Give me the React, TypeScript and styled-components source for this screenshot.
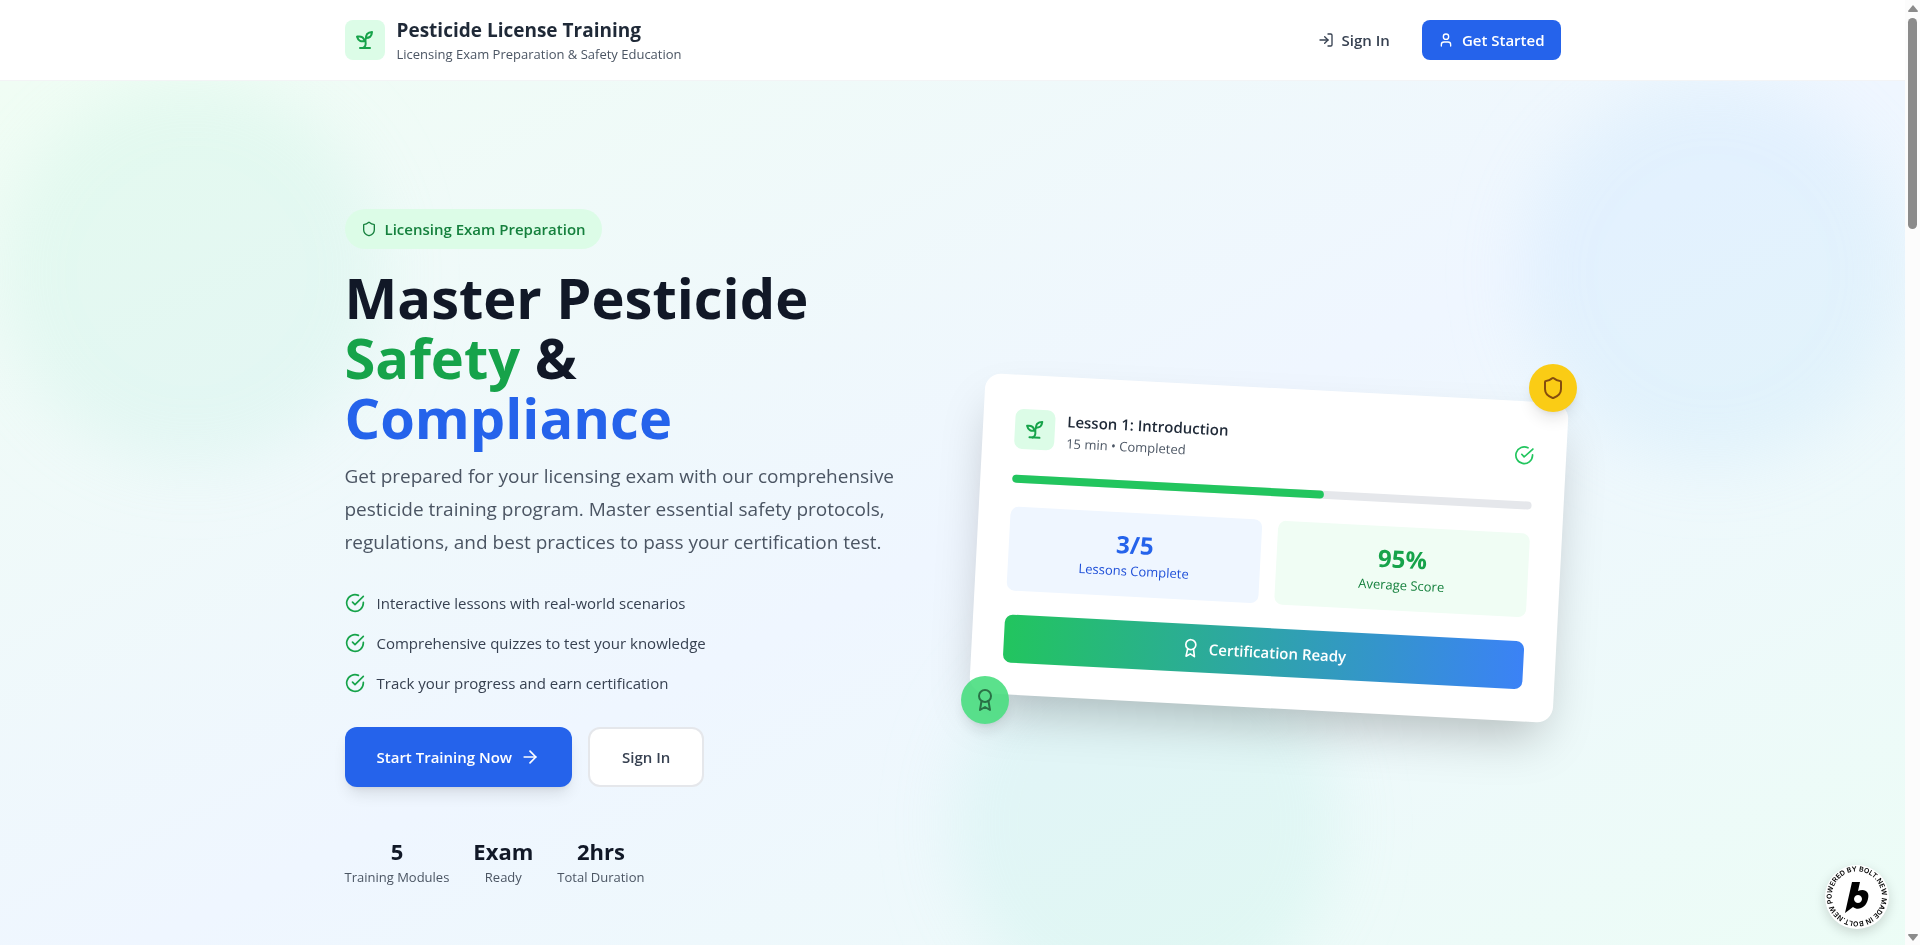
import React from 'react';
import styled, { createGlobalStyle } from 'styled-components';
import { Shield, LogIn, User, ArrowRight } from 'lucide-react';

const Global = createGlobalStyle`
  *, *::before, *::after { box-sizing: border-box; }
  html, body { margin: 0; }
  body { font-family: "Open Sans", "Noto Sans", sans-serif; font-size: 15px; line-height: 24px; color: #111827; overflow: hidden; }
  h1, h2, h3, p, ul, dl, dd, dt { margin: 0; padding: 0; }
  button { font: inherit; cursor: pointer; border: 0; }
`;

const Frame = styled.div`display: flex; height: 100vh; overflow: hidden;`;
const Page = styled.div`flex: 1; min-width: 0; position: relative;`;
const Container = styled.div`max-width: 1280px; margin: 0 auto; padding: 0 32px;`;
const Header = styled.header`background: #fff; border-bottom: 1px solid #f3f4f6; position: relative; z-index: 2;`;
const HeaderRow = styled(Container)`display: flex; align-items: center; justify-content: space-between; height: 80px;`;
const Brand = styled.div`display: flex; align-items: center; gap: 12px;`;
const SproutTile = styled.div`
  display: flex; align-items: center; justify-content: center; width: 40px; height: 40px;
  border-radius: 8px; background: #dcfce7; color: #16a34a;
`;
const BrandName = styled.div`font-size: 19px; line-height: 28px; font-weight: 700; color: #1f2937;`;
const Small = styled.p`font-size: 13px; line-height: 20px; color: #4b5563;`;
const Nav = styled.nav`display: flex; align-items: center; gap: 16px;`;
const NavButton = styled.button<{ $primary?: boolean }>`
  display: flex; align-items: center; gap: 8px; padding: 8px 16px; border-radius: 8px; font-weight: 600;
  background: ${p => (p.$primary ? '#2563eb' : 'transparent')};
  color: ${p => (p.$primary ? '#fff' : '#374151')};
`;

const Hero = styled.section`
  position: relative; overflow: hidden; padding: 128px 0;
  background: linear-gradient(to bottom right, #f0fdf4, #eff6ff, #ecfdf5);
`;
const Blob = styled.div<{ $color: string; $place: 'left' | 'right' | 'bottom' }>`
  position: absolute; width: 384px; height: 384px; border-radius: 50%;
  filter: blur(32px); opacity: 0.2; mix-blend-mode: multiply;
  background: ${p => p.$color};
  ${p => ({
    left: 'top: 0; left: 0;',
    right: 'top: 0; right: 0;',
    bottom: 'bottom: 0; left: 50%;',
  })[p.$place]}
`;
const HeroGrid = styled(Container)`
  position: relative; display: grid; grid-template-columns: 1fr 1fr; gap: 48px; align-items: center;
`;
const Copy = styled.div`display: flex; flex-direction: column; align-items: flex-start; gap: 32px;`;
const Intro = styled.div``;
const Pill = styled.div`
  display: flex; width: fit-content; align-items: center; gap: 8px; padding: 8px 16px; border-radius: 20px;
  background: #dcfce7; color: #15803d; font-weight: 600;
`;
const Title = styled.h1`margin-top: 18px; font-size: 56px; line-height: 60px; font-weight: 700;`;
const Tint = styled.span<{ $color: string; $block?: boolean }>`
  color: ${p => p.$color}; display: ${p => (p.$block ? 'block' : 'inline')};
`;
const Lead = styled.p`margin-top: 13px; font-size: 19px; line-height: 33px; color: #4b5563;`;
const Features = styled.ul`list-style: none; display: flex; flex-direction: column; gap: 16px; color: #374151;`;
const Feature = styled.li`display: flex; align-items: center; gap: 12px; svg { color: #16a34a; }`;
const Actions = styled.div`display: flex; gap: 16px;`;
const Cta = styled.button<{ $primary?: boolean }>`
  display: flex; align-items: center; gap: 8px; height: 60px; padding: 0 32px; border-radius: 12px; font-weight: 600;
  ${p => p.$primary
    ? 'background: #2563eb; color: #fff; box-shadow: 0 10px 15px -3px rgba(0,0,0,.1), 0 4px 6px -4px rgba(0,0,0,.1);'
    : 'background: #fff; color: #374151; border: 2px solid #e5e7eb;'}
`;
const Stats = styled.dl`display: flex; gap: 24px; padding-top: 16px; text-align: center;`;
const Stat = styled.div`display: flex; flex-direction: column-reverse;`;
const StatValue = styled.dd`font-size: 22px; line-height: 32px; font-weight: 700;`;
const StatLabel = styled.dt`font-size: 13px; line-height: 20px; color: #4b5563;`;

const Preview = styled.div`position: relative;`;
const Card = styled.div`
  transform: rotate(3deg); background: #fff; border-radius: 16px; padding: 32px;
  display: flex; flex-direction: column; gap: 24px; box-shadow: 0 25px 50px -12px rgba(0,0,0,.25);
`;
const CardHead = styled.div`display: flex; align-items: center; justify-content: space-between; color: #22c55e;`;
const LessonTitle = styled.h2`font-size: 15px; line-height: 24px; font-weight: 600; color: #1f2937;`;
const Track = styled.div`height: 8px; border-radius: 4px; background: #e5e7eb;`;
const Fill = styled.div`height: 8px; border-radius: 4px; background: #22c55e;`;
const Tiles = styled.dl`display: grid; grid-template-columns: 1fr 1fr; gap: 16px; text-align: center;`;
const Tile = styled.div<{ $bg: string; $value: string; $label: string }>`
  display: flex; flex-direction: column-reverse; padding: 16px; border-radius: 8px; background: ${p => p.$bg};
  dd { color: ${p => p.$value}; font-size: 24px; }
  dt { color: ${p => p.$label}; }
`;
const Ready = styled.button`
  display: flex; align-items: center; justify-content: center; gap: 8px; height: 48px; border-radius: 8px;
  background: linear-gradient(to right, #22c55e, #3b82f6); color: #fff; font-weight: 600;
`;
const Floater = styled.div<{ $corner: 'top' | 'bottom' }>`
  position: absolute; display: flex; align-items: center; justify-content: center; width: 48px; height: 48px;
  border-radius: 50%; box-shadow: 0 10px 15px -3px rgba(0,0,0,.1), 0 4px 6px -4px rgba(0,0,0,.1);
  ${p => p.$corner === 'top'
    ? 'top: -24px; right: -16px; background: #facc15; color: #854d0e;'
    : 'bottom: -16px; left: -16px; background: #4ade80; color: #166534; opacity: .9;'}
`;

const BoltBadge = styled.a`
  position: absolute; right: 16px; bottom: 16px; z-index: 3; width: 64px; height: 64px; border-radius: 50%;
  background: #fff; box-shadow: 0 4px 12px rgba(0,0,0,.15);
  text { font: 600 7px "Inter", sans-serif; fill: #000; }
  svg { display: block; }
`;
const ScrollRail = styled.div`
  width: 15px; background: #fcfcfc; display: flex; flex-direction: column; align-items: center;
  justify-content: space-between; padding: 5px 0 4px; flex: none;
`;
const ScrollThumb = styled.div`width: 9px; height: 211px; border-radius: 5px; background: #8b8b8b; margin: 6px 0 auto;`;

const Glyph = ({ size, children }: { size: number; children: React.ReactNode }) => (
  <svg
    width={size} height={size} viewBox="0 0 24 24" fill="none" stroke="currentColor"
    strokeWidth="2" strokeLinecap="round" strokeLinejoin="round" aria-hidden="true"
  >
    {children}
  </svg>
);
const Sprout = () => (
  <Glyph size={24}>
    <path d="M7 20h10" />
    <path d="M10 20c5.5-2.5.8-6.4 3-10" />
    <path d="M9.5 9.4c1.1.8 1.8 2.2 2.3 3.7-2 .4-3.5.4-4.8-.3-1.2-.6-2.3-1.9-3-4.2 2.8-.5 4.4 0 5.5.8z" />
    <path d="M14.1 6a7 7 0 0 0-1.1 4c1.9-.1 3.3-.6 4.3-1.4 1-1 1.6-2.3 1.7-4.6-2.7.1-4 1-4.9 2z" />
  </Glyph>
);
const Check = () => (
  <Glyph size={20}>
    <path d="M22 11.08V12a10 10 0 1 1-5.93-9.14" />
    <path d="m9 11 3 3L22 4" />
  </Glyph>
);
const Award = ({ size }: { size: number }) => (
  <Glyph size={size}>
    <circle cx="12" cy="8" r="6" />
    <path d="M15.477 12.89 17 22l-5-3-5 3 1.523-9.11" />
  </Glyph>
);

const features = [
  'Interactive lessons with real-world scenarios',
  'Comprehensive quizzes to test your knowledge',
  'Track your progress and earn certification',
];
const stats = [['5', 'Training Modules'], ['Exam', 'Ready'], ['2hrs', 'Total Duration']];

export default function App() {
  return (
    <Frame>
      <Global />
      <Page>
        <Header>
          <HeaderRow>
            <Brand>
              <SproutTile><Sprout /></SproutTile>
              <div>
                <BrandName>Pesticide License Training</BrandName>
                <Small>Licensing Exam Preparation &amp; Safety Education</Small>
              </div>
            </Brand>
            <Nav>
              <NavButton><LogIn size={16} />Sign In</NavButton>
              <NavButton $primary><User size={16} />Get Started</NavButton>
            </Nav>
          </HeaderRow>
        </Header>
        <Hero>
          <Blob $color="#bff0e0" $place="left" />
          <Blob $color="#bfe3fa" $place="right" />
          <Blob $color="#b8f0e0" $place="bottom" />
          <HeroGrid>
            <Copy>
              <Intro>
                <Pill><Shield size={16} />Licensing Exam Preparation</Pill>
                <Title>
                  Master Pesticide <Tint $color="#16a34a">Safety</Tint> &amp;{' '}
                  <Tint $color="#2563eb" $block>Compliance</Tint>
                </Title>
                <Lead>
                  Get prepared for your licensing exam with our comprehensive pesticide training program. Master
                  essential safety protocols, regulations, and best practices to pass your certification test.
                </Lead>
              </Intro>
              <Features>
                {features.map(f => <Feature key={f}><Check />{f}</Feature>)}
              </Features>
              <Actions>
                <Cta $primary>Start Training Now<ArrowRight size={20} /></Cta>
                <Cta>Sign In</Cta>
              </Actions>
              <Stats>
                {stats.map(([v, l]) => (
                  <Stat key={l}><StatLabel>{l}</StatLabel><StatValue>{v}</StatValue></Stat>
                ))}
              </Stats>
            </Copy>
            <Preview>
              <Card>
                <CardHead>
                  <Brand>
                    <SproutTile><Sprout /></SproutTile>
                    <div>
                      <LessonTitle>Lesson 1: Introduction</LessonTitle>
                      <Small>15 min • Completed</Small>
                    </div>
                  </Brand>
                  <Check />
                </CardHead>
                <Track><Fill style={{ width: '60%' }} /></Track>
                <Tiles>
                  <Tile $bg="#eff6ff" $value="#2563eb" $label="#1d4ed8">
                    <StatLabel>Lessons Complete</StatLabel><StatValue>3/5</StatValue>
                  </Tile>
                  <Tile $bg="#f0fdf4" $value="#16a34a" $label="#15803d">
                    <StatLabel>Average Score</StatLabel><StatValue>95%</StatValue>
                  </Tile>
                </Tiles>
                <Ready><Award size={20} />Certification Ready</Ready>
              </Card>
              <Floater $corner="top"><Shield size={24} /></Floater>
              <Floater $corner="bottom"><Award size={24} /></Floater>
            </Preview>
          </HeroGrid>
        </Hero>
        <BoltBadge href="#bolt" aria-label="Powered by Bolt.new">
          <svg width="64" height="64" viewBox="0 0 64 64">
            <path id="ring" d="M7.9 38.5A25 25 0 1 1 7.93 38.6" fill="none" />
            <text><textPath href="#ring">POWERED BY BOLT.NEW MADE IN BOLT.NEW</textPath></text>
            <path fillRule="evenodd" d="M27 17h8l-2 9c7-3 12 1 10 8-2 9-10 12-15 8l-8 6zM33 30a4 4 0 1 0 .01 0z" />
          </svg>
        </BoltBadge>
      </Page>
      <ScrollRail aria-hidden="true">
        <svg width="10" height="7" viewBox="0 0 10 7"><path d="M5 0l5 6q0 1-1 1H1Q0 7 0 6z" fill="#8b8b8b" /></svg>
        <ScrollThumb />
        <svg width="10" height="7" viewBox="0 0 10 7"><path d="M5 7l5-6q0-1-1-1H1Q0 0 0 1z" fill="#8b8b8b" /></svg>
      </ScrollRail>
    </Frame>
  );
}
